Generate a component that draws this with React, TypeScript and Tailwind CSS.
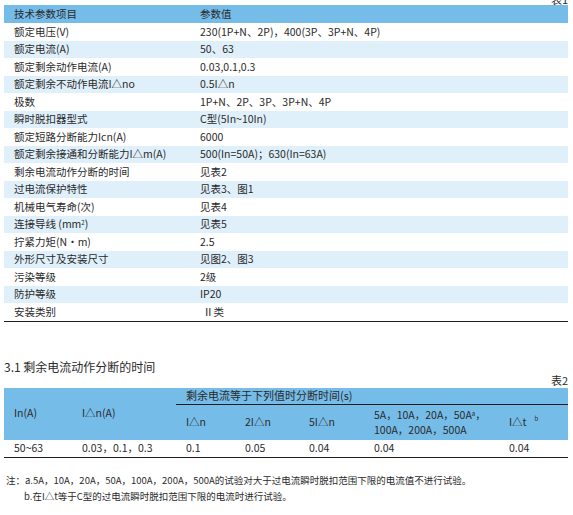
import type { ReactNode } from 'react';

const PARAMS: [ReactNode, ReactNode][] = [
  ['额定电压(V)', '230(1P+N、2P)，400(3P、3P+N、4P)'],
  ['额定电流(A)', '50、63'],
  ['额定剩余动作电流(A)', '0.03,0.1,0.3'],
  ['额定剩余不动作电流I△no', '0.5I△n'],
  ['极数', '1P+N、2P、3P、3P+N、4P'],
  ['瞬时脱扣器型式', 'C型(5In~10In)'],
  ['额定短路分断能力Icn(A)', '6000'],
  ['额定剩余接通和分断能力I△m(A)', '500(In=50A)；630(In=63A)'],
  ['剩余电流动作分断的时间', '见表2'],
  ['过电流保护特性', '见表3、图1'],
  ['机械电气寿命(次)', '见表4'],
  [
    <>
      连接导线 (mm<sup className="text-[6px]">2</sup>)
    </>,
    '见表5',
  ],
  ['拧紧力矩(N•m)', '2.5'],
  ['外形尺寸及安装尺寸', '见图2、图3'],
  ['污染等级', '2级'],
  ['防护等级', 'IP20'],
  ['安装类别', <span className="pl-[3px]">Ⅱ类</span>],
];

const COLS = 'grid grid-cols-[68px_104px_59px_64px_65px_135px_69px]';

export default function App() {
  return (
    <div className="h-[515px] w-[573px] overflow-hidden bg-white pl-[4px] pr-[5px] font-['Noto_Sans_CJK_SC',sans-serif] text-[#2a2a2a]">
      {/* 上一页剩下的表号 */}
      <div className="relative h-[5px] overflow-hidden">
        <span className="absolute -top-[9px] right-0 text-[11px]">表1</span>
      </div>

      <div className="border-b border-[#1e1e1e]">
        <div className="grid h-[18px] grid-cols-[196px_1fr] items-center bg-[#76bce8] text-[10.5px] leading-none">
          <span className="pl-[10px]">技术参数项目</span>
          <span>参数值</span>
        </div>
        {PARAMS.map(([name, value], i) => (
          <div
            key={i}
            className={`grid h-[17.5px] grid-cols-[196px_1fr] items-center text-[10.5px] leading-none ${
              i % 2 === 1 ? 'bg-[#dff0fb]' : 'bg-white'
            }`}
          >
            <span className="pl-[10px]">{name}</span>
            <span>{value}</span>
          </div>
        ))}
      </div>

      <p className="mt-[37px] text-[12px] leading-[16px]">3.1 剩余电流动作分断的时间</p>
      <p className="-mt-[1px] text-right text-[11px] leading-[12px]">表2</p>

      <div className="mt-[2px] border-b border-[#1e1e1e] text-[10.5px] leading-none">
        <div className={`${COLS} h-[52px] bg-[#76bce8]`}>
          <div className="flex items-center pl-[10px]">In(A)</div>
          <div className="flex items-center pl-[10px]">I△n(A)</div>
          <div className="col-span-5 flex flex-col">
            <div className="flex h-[17px] items-center border-b border-[#1e1e1e] pl-[10px] text-[11px]">
              剩余电流等于下列值时分断时间(s)
            </div>
            <div className="grid flex-1 grid-cols-[59px_64px_65px_135px_69px]">
              <div className="flex items-center pl-[10px]">I△n</div>
              <div className="flex items-center pl-[10px]">2I△n</div>
              <div className="flex items-center pl-[10px]">5I△n</div>
              <div className="flex flex-col justify-center pl-[10px] leading-[15px]">
                <span>
                  5A，10A，20A，50A<sup className="text-[6px]">a</sup>，
                </span>
                <span>100A，200A，500A</span>
              </div>
              <div className="flex items-center pl-[10px]">
                I△t<sup className="ml-[8px] text-[6px]">b</sup>
              </div>
            </div>
          </div>
        </div>
        <div className={`${COLS} h-[17px] items-center`}>
          <span className="pl-[10px]">50~63</span>
          <span className="pl-[10px]">0.03，0.1，0.3</span>
          <span className="pl-[10px]">0.1</span>
          <span className="pl-[10px]">0.05</span>
          <span className="pl-[10px]">0.04</span>
          <span className="pl-[10px]">0.04</span>
          <span className="pl-[10px]">0.04</span>
        </div>
      </div>

      <div className="mt-[14px] pl-[2px] text-[9.5px] leading-[16px]">
        <p>注：a.5A，10A，20A，50A，100A，200A，500A的试验对大于过电流瞬时脱扣范围下限的电流值不进行试验。</p>
        <p className="pl-[18px]">b.在I△t等于C型的过电流瞬时脱扣范围下限的电流时进行试验。</p>
      </div>
    </div>
  );
}
